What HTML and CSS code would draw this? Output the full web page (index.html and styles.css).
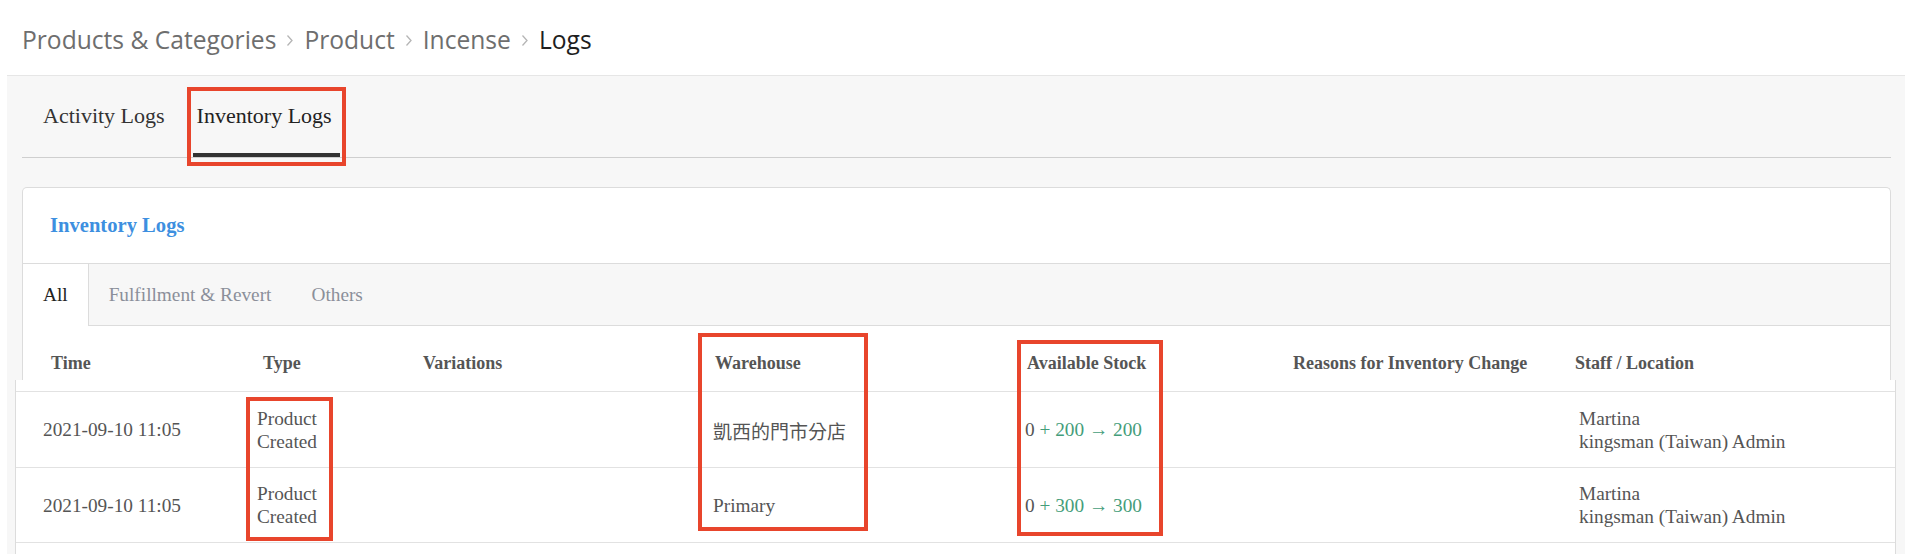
FILE: index.html
```html
<!DOCTYPE html>
<html>
<head>
<meta charset="utf-8">
<link rel="stylesheet" href="styles.css">
</head>
<body>
<nav class="crumbs">
  <span class="crumb">Products &amp; Categories</span>
  <svg class="sep" viewBox="0 0 8 13" width="8" height="13"><path d="M1.5 1.5 L6 6.5 L1.5 11.5" fill="none" stroke="#b5b5b5" stroke-width="1.3"/></svg>
  <span class="crumb">Product</span>
  <svg class="sep" viewBox="0 0 8 13" width="8" height="13"><path d="M1.5 1.5 L6 6.5 L1.5 11.5" fill="none" stroke="#b5b5b5" stroke-width="1.3"/></svg>
  <span class="crumb">Incense</span>
  <svg class="sep" viewBox="0 0 8 13" width="8" height="13"><path d="M1.5 1.5 L6 6.5 L1.5 11.5" fill="none" stroke="#b5b5b5" stroke-width="1.3"/></svg>
  <span class="crumb current">Logs</span>
</nav>

<section class="panel">
  <div class="panel-inner">
    <div class="tabs">
      <div class="tab">Activity Logs</div>
      <div class="tab active">Inventory Logs</div>
    </div>

    <div class="card">
      <div class="card-head">Inventory Logs</div>
      <div class="subtabs">
        <div class="subtab active">All</div>
        <div class="subtab">Fulfillment &amp; Revert</div>
        <div class="subtab">Others</div>
      </div>
      <div class="thead">
        <div>Time</div>
        <div>Type</div>
        <div>Variations</div>
        <div>Warehouse</div>
        <div>Available Stock</div>
        <div>Reasons for Inventory Change</div>
        <div>Staff / Location</div>
      </div>
    </div>
  </div>

  <div class="rows">
    <div class="row">
      <div>2021-09-10 11:05</div>
      <div class="type">Product Created</div>
      <div></div>
      <div class="cjk">凱西的門市分店</div>
      <div><span class="old">0</span> <span class="delta">+ 200 → 200</span></div>
      <div></div>
      <div><div>Martina</div><div>kingsman (Taiwan) Admin</div></div>
    </div>
    <div class="row">
      <div>2021-09-10 11:05</div>
      <div class="type">Product Created</div>
      <div></div>
      <div>Primary</div>
      <div><span class="old">0</span> <span class="delta">+ 300 → 300</span></div>
      <div></div>
      <div><div>Martina</div><div>kingsman (Taiwan) Admin</div></div>
    </div>
  </div>

  <div class="mark mark-tab"></div>
  <div class="mark mark-type"></div>
  <div class="mark mark-wh"></div>
  <div class="mark mark-stock"></div>
</section>
</body>
</html>
```
FILE: styles.css
```css
* { box-sizing: border-box; }
html, body { margin: 0; padding: 0; background: #fff; }
body {
  font-family: "Liberation Serif", "Noto Sans CJK TC", serif;
  color: #555;
  width: 1916px;
  height: 554px;
  overflow: hidden;
}

.crumbs {
  height: 75px;
  padding: 4px 0 0 22px;
  display: flex;
  align-items: center;
  font-family: "Open Sans", "Liberation Sans", sans-serif;
  font-size: 24.6px;
  color: #6e6e6e;
}
.crumb { white-space: nowrap; }
.crumb.current { color: #1e1e1e; }
.sep { margin: 2px 10px 0 10px; flex: none; }

.panel {
  position: relative;
  margin: 0 11px 0 7px;
  background: #f7f7f7;
  border-top: 1px solid #e6e6e6;
  height: 479px;
}
.panel-inner { padding: 0 14px 0 15px; }

.tabs {
  display: flex;
  height: 82px;
  border-bottom: 1px solid #cfcfcf;
  padding-left: 21px;
  font-size: 22px;
  color: #333;
}
.tab {
  display: flex;
  align-items: center;
  padding-top: 3px;
  border-bottom: 4px solid transparent;
}
.tab + .tab { margin-left: 28px; padding: 3px 8px 0 4px; }
.tab.active { border-bottom-color: #333; color: #222; }

.card {
  margin-top: 29px;
  background: #fff;
  border: 1px solid #dcdcdc;
  border-bottom: none;
  border-radius: 5px 5px 0 0;
  height: 193px;
}
.card-head {
  height: 76px;
  border-bottom: 1px solid #dcdcdc;
  padding: 0 0 0 27px;
  display: flex;
  align-items: center;
  color: #3d8fe0;
  font-weight: bold;
  font-size: 20.6px;
}
.subtabs {
  display: flex;
  height: 62px;
  background: #f7f7f7;
  border-bottom: 1px solid #dcdcdc;
  font-size: 19.3px;
  color: #8b8f9a;
}
.subtab {
  display: flex;
  align-items: center;
  padding: 0 20px;
}
.subtab.active {
  background: #fff;
  color: #222;
  border-right: 1px solid #dcdcdc;
  margin-bottom: -1px;
  padding-right: 20px;
}

.thead {
  display: grid;
  grid-template-columns: 212px 160px 292px 312px 266px 282px 1fr;
  padding: 26px 0 0 28px;
  font-weight: bold;
  font-size: 18px;
  line-height: 22px;
  color: #555;
}

.rows {
  margin: 0 9px 0 8px;
  background: #fff;
  border-left: 1px solid #dcdcdc;
  border-right: 1px solid #dcdcdc;
  padding-top: 11px;
  height: 174px;
}
.row {
  display: grid;
  grid-template-columns: 214px 166px 290px 312px 268px 286px 1fr;
  align-items: center;
  height: 76px;
  padding-left: 27px;
  border-top: 1px solid #e2e2e2;
  font-size: 19.3px;
  line-height: 23px;
  color: #555;
}
.row:last-child { border-bottom: 1px solid #e2e2e2; }
.type { max-width: 80px; }
.cjk { font-family: "Noto Sans CJK TC", sans-serif; font-size: 19px; margin-top: 2px; }
.old { color: #555; }
.delta { color: #449d7a; }

.mark {
  position: absolute;
  border: 4px solid #e8452c;
}
.mark-tab { left: 180px; top: 11px; width: 159px; height: 79px; }
.mark-type { left: 239px; top: 321px; width: 87px; height: 144px; }
.mark-wh { left: 691px; top: 257px; width: 170px; height: 198px; }
.mark-stock { left: 1010px; top: 264px; width: 146px; height: 196px; }
```
